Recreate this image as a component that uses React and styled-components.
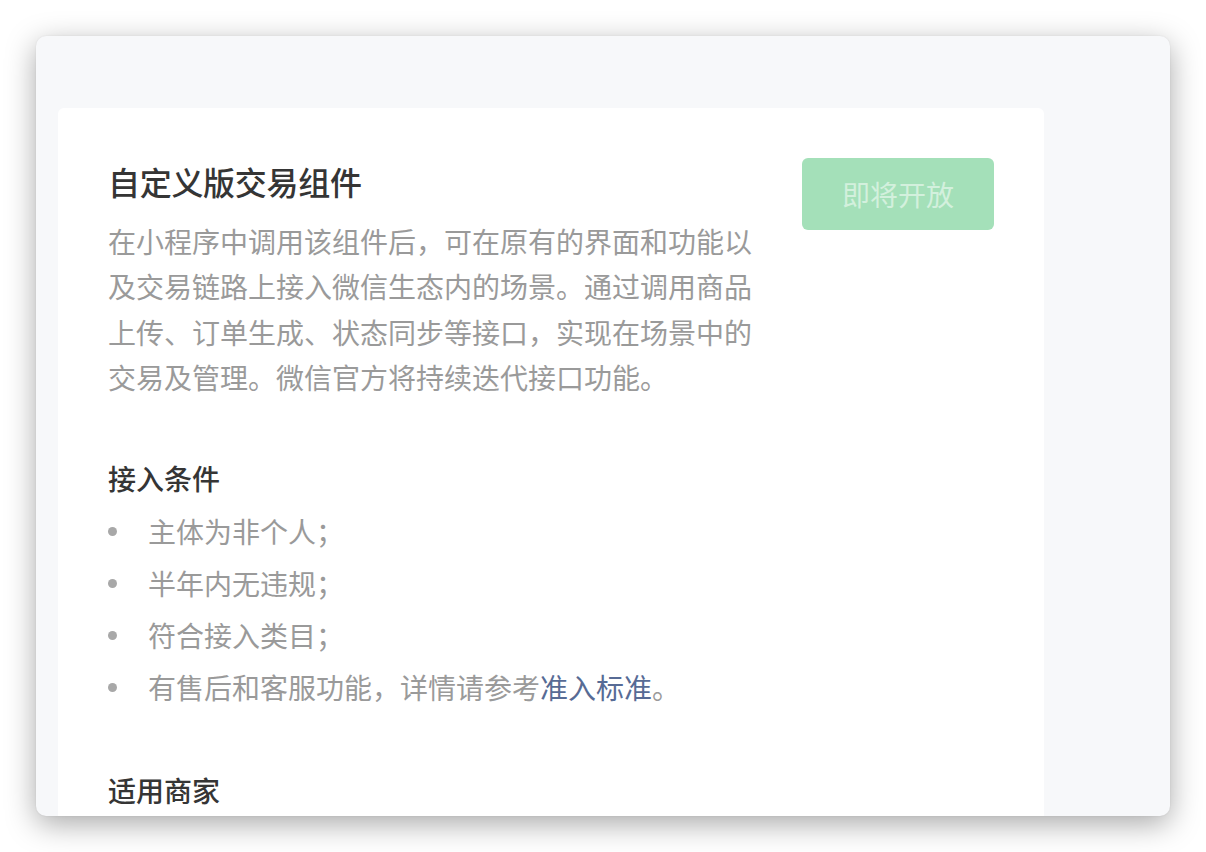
import React from "react";
import styled, { createGlobalStyle } from "styled-components";

const Global = createGlobalStyle`
  html, body { margin: 0; padding: 0; background: #ffffff; }
  body { font-family: "Noto Sans CJK SC", "Noto Sans", sans-serif; }
  * { box-sizing: border-box; }
`;

const Stage = styled.div`
  padding: 36px;
  width: 1206px;
  height: 852px;
`;

const Window = styled.div`
  width: 1134px;
  height: 780px;
  background: #f7f8fa;
  border-radius: 10px;
  box-shadow: 0 8px 30px rgba(0, 0, 0, 0.34), 0 0 2px rgba(0, 0, 0, 0.08);
  overflow: hidden;
  padding: 72px 0 0 22px;
`;

const Card = styled.div`
  width: 986px;
  min-height: 760px;
  background: #ffffff;
  border-radius: 6px;
  padding: 52px 50px 60px 50px;
`;

const Header = styled.div`
  display: flex;
  justify-content: space-between;
  align-items: flex-start;
`;

const Intro = styled.div`
  width: 660px;
`;

const Title = styled.h1`
  margin: 0;
  font-size: 32px;
  line-height: 42px;
  font-weight: 500;
  color: #353535;
  letter-spacing: -0.3px;
`;

const Desc = styled.p`
  margin: 17px 0 0;
  font-size: 28px;
  line-height: 45.4px;
  color: #9a9a9a;
`;

const Button = styled.button`
  margin-top: -2px;
  width: 192px;
  height: 72px;
  border: none;
  border-radius: 6px;
  background: #a4e0b9;
  color: #d3f0dd;
  font-family: inherit;
  font-size: 28px;
  line-height: 72px;
  padding: 0;
  flex-shrink: 0;
`;

const Section = styled.section`
  margin-top: 57px;
`;

const Heading = styled.h2`
  margin: 0;
  font-size: 28px;
  line-height: 40px;
  font-weight: 500;
  color: #353535;
`;

const List = styled.ul`
  margin: 7px 0 0;
  padding: 0;
  list-style: none;
`;

const Item = styled.li`
  position: relative;
  padding-left: 40px;
  font-size: 28px;
  line-height: 52px;
  color: #9a9a9a;

  &::before {
    content: "";
    position: absolute;
    left: 0;
    top: 22px;
    width: 9px;
    height: 9px;
    border-radius: 50%;
    background: #a8a8a8;
  }
`;

const Link = styled.a`
  color: #576b95;
  text-decoration: none;
`;

export default function App() {
  return (
    <>
      <Global />
      <Stage>
        <Window>
          <Card>
            <Header>
              <Intro>
                <Title>自定义版交易组件</Title>
                <Desc>
                  在小程序中调用该组件后，可在原有的界面和功能以及交易链路上接入微信生态内的场景。通过调用商品上传、订单生成、状态同步等接口，实现在场景中的交易及管理。微信官方将持续迭代接口功能。
                </Desc>
              </Intro>
              <Button disabled>即将开放</Button>
            </Header>
            <Section>
              <Heading>接入条件</Heading>
              <List>
                <Item>主体为非个人；</Item>
                <Item>半年内无违规；</Item>
                <Item>符合接入类目；</Item>
                <Item>
                  有售后和客服功能，详情请参考<Link href="#">准入标准</Link>。
                </Item>
              </List>
            </Section>
            <Section>
              <Heading>适用商家</Heading>
            </Section>
          </Card>
        </Window>
      </Stage>
    </>
  );
}
